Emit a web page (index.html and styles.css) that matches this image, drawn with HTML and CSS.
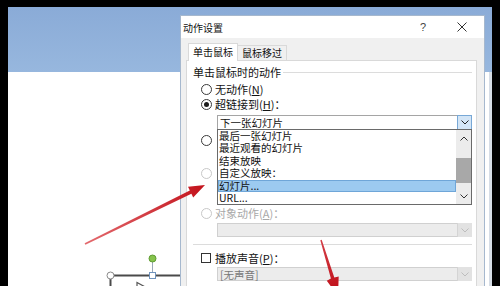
FILE: index.html
```html
<!DOCTYPE html>
<html lang="zh-CN">
<head>
    <meta charset="UTF-8">
    <title>动作设置</title>
    <link rel="stylesheet" href="styles.css">
</head>
<body>
    <!-- 背景里的 PowerPoint 窗口 -->
    <div class="screen">
        <div class="ribbon"></div>
        <div class="workspace"></div>
    </div>

    <!-- 幻灯片上被选中的形状 -->
    <svg class="shape" width="500" height="286" viewBox="0 0 500 286">
        <line x1="110" y1="275.5" x2="182" y2="275.5" stroke="#4a4a4a" stroke-width="2"/>
        <line x1="110.5" y1="275" x2="110.5" y2="290" stroke="#4a4a4a" stroke-width="2"/>
        <line x1="152.5" y1="261" x2="152.5" y2="273" stroke="#9aa8b8" stroke-width="1"/>
        <polyline points="137,290 137,282.5 149,289" fill="none" stroke="#555" stroke-width="1.2"/>
        <circle cx="110.5" cy="275.5" r="3.5" fill="#fff" stroke="#8a8a8a"/>
        <rect x="149.5" y="272.5" width="6" height="6" fill="#fff" stroke="#6f93bd"/>
        <circle cx="152.5" cy="258.5" r="3.5" fill="#86c34c" stroke="#5f9c33"/>
    </svg>

    <div class="dialog">
        <div class="titlebar">
            <span class="title">动作设置</span>
            <span class="help">?</span>
            <svg class="close" width="10" height="10" viewBox="0 0 10 10">
                <path d="M0.5 0.5L9.5 9.5M9.5 0.5L0.5 9.5" stroke="#333" stroke-width="1"/>
            </svg>
        </div>

        <div class="dialog-body">
            <div class="tabs">
                <div class="tab active">单击鼠标</div>
                <div class="tab">鼠标移过</div>
            </div>

            <div class="panel">
                <div class="group-head"><span>单击鼠标时的动作</span><i></i></div>

                <div class="opt r1"><span class="radio"></span>无动作(<u>N</u>)</div>
                <div class="opt r2"><span class="radio on"></span>超链接到(<u>H</u>)：</div>

                <div class="field f1">
                    <span class="val">下一张幻灯片</span>
                    <span class="drop-btn">
                        <svg width="8" height="5" viewBox="0 0 8 5"><path d="M0.5 0.5L4 4L7.5 0.5" fill="none" stroke="#222"/></svg>
                    </span>
                    <!-- 展开的下拉列表 -->
                    <div class="droplist">
                        <ul>
                            <li>最后一张幻灯片</li>
                            <li>最近观看的幻灯片</li>
                            <li>结束放映</li>
                            <li>自定义放映：</li>
                            <li class="sel">幻灯片...</li>
                            <li>URL...</li>
                        </ul>
                        <div class="sbar">
                            <span class="sbtn">
                                <svg width="8" height="5" viewBox="0 0 8 5"><path d="M0.5 4.5L4 1L7.5 4.5" fill="none" stroke="#333"/></svg>
                            </span>
                            <span class="track"><b></b></span>
                            <span class="sbtn">
                                <svg width="8" height="5" viewBox="0 0 8 5"><path d="M0.5 0.5L4 4L7.5 0.5" fill="none" stroke="#333"/></svg>
                            </span>
                        </div>
                    </div>
                </div>

                <div class="opt r3"><span class="radio"></span></div>
                <div class="field f2"></div>
                <div class="opt off r4"><span class="radio"></span></div>
                <div class="field off f3"></div>

                <div class="opt off r5"><span class="radio"></span>对象动作(<u>A</u>)：</div>
                <div class="field off f4">
                    <span class="drop-btn">
                        <svg width="8" height="5" viewBox="0 0 8 5"><path d="M0.5 0.5L4 4L7.5 0.5" fill="none" stroke="#bdbdbd"/></svg>
                    </span>
                </div>

                <div class="sep"></div>

                <div class="opt c1"><span class="check"></span>播放声音(<u>P</u>)：</div>
                <div class="field off f5">
                    <span class="val">[无声音]</span>
                    <span class="drop-btn">
                        <svg width="8" height="5" viewBox="0 0 8 5"><path d="M0.5 0.5L4 4L7.5 0.5" fill="none" stroke="#bdbdbd"/></svg>
                    </span>
                </div>
                <div class="opt c2"><span class="check"></span>单击时突出显示(<u>C</u>)</div>
            </div>
        </div>
    </div>

    <!-- 红色标注箭头 -->
    <svg class="arrows" width="500" height="286" viewBox="0 0 500 286">
        <defs>
            <linearGradient id="red1" x1="85" y1="244" x2="205" y2="185" gradientUnits="userSpaceOnUse">
                <stop offset="0" stop-color="#e36a6e"/>
                <stop offset="1" stop-color="#c3121b"/>
            </linearGradient>
            <linearGradient id="red2" x1="321" y1="240" x2="337" y2="290" gradientUnits="userSpaceOnUse">
                <stop offset="0" stop-color="#d44048"/>
                <stop offset="1" stop-color="#c0101a"/>
            </linearGradient>
        </defs>
        <polygon fill="url(#red1)" points="84.6,243.3 189.8,190.5 188,186.7 205,185 193.2,197.5 191.4,193.7 85.4,244.7"/>
        <polygon fill="url(#red2)" points="320.3,240.2 321.7,239.8 334.3,277.4 338.7,276.6 338,296 326.8,280.8 330.9,278.4"/>
    </svg>
</body>
</html>
```

FILE: styles.css
```css
/* 基础样式 */
body {
    margin: 0;
    padding: 7px 8px 0;
    height: 286px;
    box-sizing: border-box;
    background: #000;
    overflow: hidden;
    position: relative;
    font-family: "Noto Sans CJK SC", "Noto Sans", sans-serif;
    color: #111;
}

.screen {
    height: 279px;
    display: flex;
    flex-direction: column;
    background: #fff;
}

.ribbon {
    height: 65px;
    background: linear-gradient(#8aabd7, #97b7de);
}

.workspace {
    flex: 1;
    background: #fff;
    box-shadow: inset -3px 0 0 #d6dde6;
}

.shape,
.arrows {
    position: absolute;
    left: 0;
    top: 0;
}

/* 对话框 */
.dialog {
    position: absolute;
    left: 180px;
    top: 15px;
    width: 305px;
    height: 290px;
    box-sizing: border-box;
    border: 1px solid #a6b8ce;
    background: #f0f0f0;
}

.titlebar {
    height: 22px;
    background: #fff;
    display: flex;
    align-items: center;
    padding: 0 17px 0 2px;
}

.title {
    font-size: 10px;
}

.help {
    margin-left: auto;
    width: 8px;
    text-align: center;
    font-family: "Liberation Sans", sans-serif;
    font-size: 11px;
    color: #444;
}

.close {
    margin-left: 30px;
}

.dialog-body {
    padding: 5px 7px 0 5px;
}

.tabs {
    display: flex;
    align-items: flex-end;
    height: 17px;
    padding-left: 2px;
}

.tab {
    box-sizing: border-box;
    width: 49px;
    height: 15px;
    border: 1px solid #d9d9d9;
    border-left: none;
    border-bottom: none;
    font-size: 10px;
    line-height: 14px;
    text-align: center;
}

.tab.active {
    width: 50px;
    height: 18px;
    margin-bottom: -1px;
    border-left: 1px solid #d9d9d9;
    background: #fff;
    position: relative;
    z-index: 1;
    line-height: 16px;
}

.panel {
    height: 240px;
    border: 1px solid #d9d9d9;
    background: #fff;
    padding: 4px 4px 0 6px;
    font-size: 11px;
}

.group-head {
    display: flex;
    align-items: center;
    height: 14px;
}

.group-head i {
    flex: 1;
    height: 1px;
    background: #dcdcdc;
    margin-left: 2px;
}

.opt {
    display: flex;
    align-items: center;
    height: 14px;
    margin-left: 8px;
    white-space: nowrap;
}

.opt u {
    text-underline-offset: 1px;
}

.opt.off {
    color: #a8a8a8;
}

.radio {
    width: 11px;
    height: 11px;
    box-sizing: border-box;
    border: 1px solid #3a3a3a;
    border-radius: 50%;
    background: #fff;
    margin-right: 3px;
    display: flex;
    align-items: center;
    justify-content: center;
}

.radio.on::after {
    content: "";
    width: 5px;
    height: 5px;
    border-radius: 50%;
    background: #1c1c1c;
}

.opt.off .radio {
    border-color: #c8c8c8;
}

.check {
    width: 10px;
    height: 10px;
    box-sizing: border-box;
    border: 1px solid #333;
    margin-right: 4px;
}

.r1 { margin-top: 3px; }
.r2 { margin-top: 1px; }
.r3 { margin-top: 3px; }
.r4 { margin-top: 2px; }
.r5 { margin-top: 8px; }
.c1 { margin-top: 6px; }
.c2 { margin-top: 3px; }

/* 输入框和下拉框 */
.field {
    margin-left: 24px;
    height: 15px;
    box-sizing: border-box;
    border: 1px solid #a5a5a5;
    background: #fff;
    display: flex;
    align-items: center;
    position: relative;
    font-size: 10.5px;
}

.field .val {
    padding-left: 2px;
}

.field.off {
    background: #ececec;
    border-color: #d0d0d0;
    color: #777;
}

.drop-btn {
    margin: -1px -1px -1px auto;
    width: 15px;
    height: 15px;
    box-sizing: border-box;
    display: flex;
    align-items: center;
    justify-content: center;
}

.f1 .drop-btn {
    background: #d3e5f6;
    border: 1px solid #78a8d6;
}

.field.off .drop-btn {
    background: #e2e2e2;
    border-left: 1px solid #d4d4d4;
}

.f1 { margin-top: 4px; }
.f2 { margin-top: 3px; height: 14px; }
.f3 { margin-top: 3px; }
.f4 { margin-top: 3px; height: 14px; }
.f4 .drop-btn { height: 14px; }
.f5 { margin-top: 2px; height: 14px; }
.f5 .drop-btn { height: 14px; }

.droplist {
    position: absolute;
    left: -1px;
    right: -1px;
    top: 100%;
    height: 76px;
    box-sizing: border-box;
    border: 1px solid #6a6a6a;
    background: #fff;
    display: flex;
    z-index: 2;
}

.droplist ul {
    flex: 1;
    list-style: none;
    margin: 0;
    padding: 0;
}

.droplist li {
    height: 12.4px;
    line-height: 12.4px;
    padding-left: 1px;
    white-space: nowrap;
}

.droplist li.sel {
    background: #9ccaf0;
    box-shadow: inset 0 0 0 1px #6fa6d8;
}

.sbar {
    width: 15px;
    background: #ececec;
    display: flex;
    flex-direction: column;
}

.sbtn {
    height: 16px;
    display: flex;
    align-items: center;
    justify-content: center;
}

.track {
    flex: 1;
    padding-top: 12px;
}

.track b {
    display: block;
    height: 25px;
    background: #a8a8a8;
}

.sep {
    margin-top: 7px;
    height: 1px;
    background: #dcdcdc;
}
```
